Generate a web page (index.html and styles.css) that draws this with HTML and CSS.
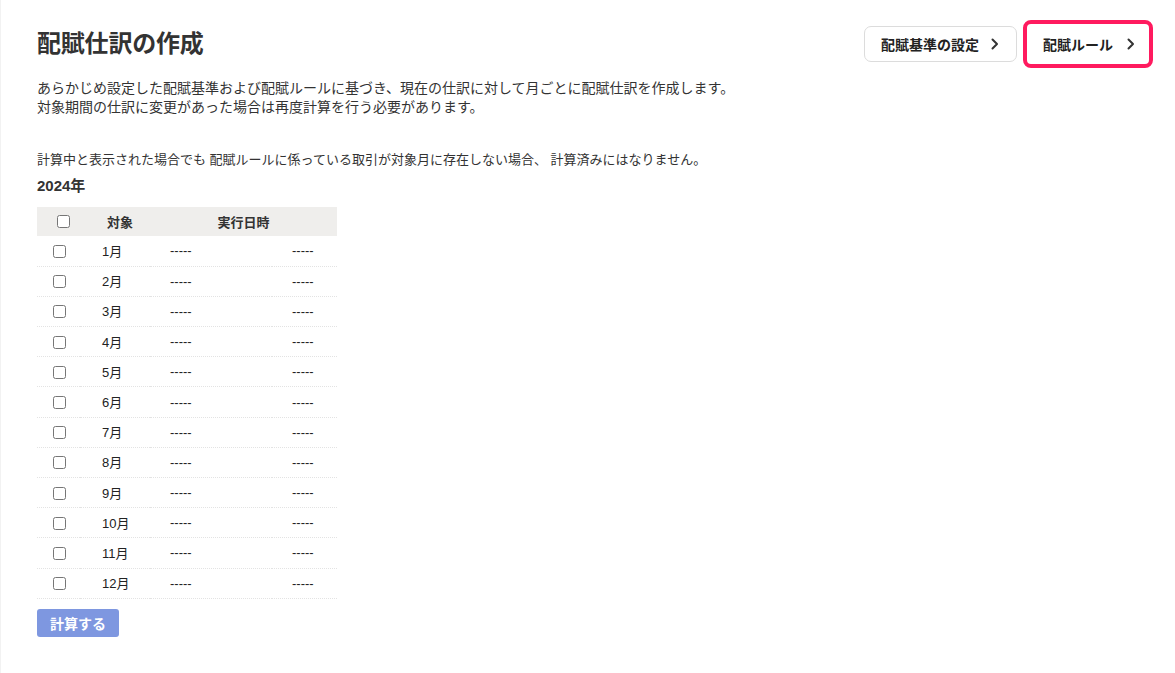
FILE: index.html
```html
<!DOCTYPE html>
<html lang="ja">
<head>
  <meta charset="UTF-8" />
  <meta name="viewport" content="width=device-width, initial-scale=1.0"/>
  <title>配賦仕訳の作成</title>
  <link rel="stylesheet" href="styles.css">
</head>
<body>
  <div class="page">
    <div class="page-header">
      <h1 class="page-title">配賦仕訳の作成</h1>
      <div class="header-actions">
        <a class="link-button link-button-base" href="#">配賦基準の設定
          <svg class="chevron" viewBox="0 0 8 12"><polyline points="1.5,1.5 6,6 1.5,10.5" /></svg>
        </a>
        <span class="highlight">
          <a class="link-button link-button-rule" href="#">配賦ルール
            <svg class="chevron" viewBox="0 0 8 12"><polyline points="1.5,1.5 6,6 1.5,10.5" /></svg>
          </a>
        </span>
      </div>
    </div>

    <p class="description">
      あらかじめ設定した配賦基準および配賦ルールに基づき、現在の仕訳に対して月ごとに配賦仕訳を作成します。<br>
      対象期間の仕訳に変更があった場合は再度計算を行う必要があります。
    </p>

    <p class="note">計算中と表示された場合でも 配賦ルールに係っている取引が対象月に存在しない場合、 計算済みにはなりません。</p>

    <h2 class="year">2024年</h2>

    <table class="month-table">
      <colgroup>
        <col class="col-check">
        <col class="col-month">
        <col class="col-date">
        <col class="col-status">
      </colgroup>
      <thead>
        <tr>
          <th class="cell-check-head"><input type="checkbox"></th>
          <th class="cell-target-head">対象</th>
          <th colspan="2">実行日時</th>
        </tr>
      </thead>
      <tbody>
        <tr><td class="cell-check"><input type="checkbox"></td><td class="cell-month">1月</td><td class="cell-dash">-----</td><td class="cell-dash">-----</td></tr>
        <tr><td class="cell-check"><input type="checkbox"></td><td class="cell-month">2月</td><td class="cell-dash">-----</td><td class="cell-dash">-----</td></tr>
        <tr><td class="cell-check"><input type="checkbox"></td><td class="cell-month">3月</td><td class="cell-dash">-----</td><td class="cell-dash">-----</td></tr>
        <tr><td class="cell-check"><input type="checkbox"></td><td class="cell-month">4月</td><td class="cell-dash">-----</td><td class="cell-dash">-----</td></tr>
        <tr><td class="cell-check"><input type="checkbox"></td><td class="cell-month">5月</td><td class="cell-dash">-----</td><td class="cell-dash">-----</td></tr>
        <tr><td class="cell-check"><input type="checkbox"></td><td class="cell-month">6月</td><td class="cell-dash">-----</td><td class="cell-dash">-----</td></tr>
        <tr><td class="cell-check"><input type="checkbox"></td><td class="cell-month">7月</td><td class="cell-dash">-----</td><td class="cell-dash">-----</td></tr>
        <tr><td class="cell-check"><input type="checkbox"></td><td class="cell-month">8月</td><td class="cell-dash">-----</td><td class="cell-dash">-----</td></tr>
        <tr><td class="cell-check"><input type="checkbox"></td><td class="cell-month">9月</td><td class="cell-dash">-----</td><td class="cell-dash">-----</td></tr>
        <tr><td class="cell-check"><input type="checkbox"></td><td class="cell-month">10月</td><td class="cell-dash">-----</td><td class="cell-dash">-----</td></tr>
        <tr><td class="cell-check"><input type="checkbox"></td><td class="cell-month">11月</td><td class="cell-dash">-----</td><td class="cell-dash">-----</td></tr>
        <tr><td class="cell-check"><input type="checkbox"></td><td class="cell-month">12月</td><td class="cell-dash">-----</td><td class="cell-dash">-----</td></tr>
      </tbody>
    </table>

    <button class="button-calc" disabled>計算する</button>
  </div>
</body>
</html>
```

FILE: styles.css
```css
:root {
  --text-color: #333;
  --border-color: #dcdcdc;
  --head-bg: #efeeec;
  --accent: #7e97e0;
  --highlight: #ff1a5f;
}

* {
  box-sizing: border-box;
  margin: 0;
  padding: 0;
}

body {
  font-family: "Liberation Sans", "Noto Sans CJK JP", sans-serif;
  color: var(--text-color);
  background: #fff;
}

.page {
  min-height: 673px;
  padding: 20px 22px 0 36px;
  border-left: 1px solid #f2f2f2;
}

.page-header {
  display: flex;
  align-items: center;
  justify-content: space-between;
  height: 48px;
}

.page-title {
  font-size: 24px;
  font-weight: 700;
  line-height: 32px;
  letter-spacing: -0.2px;
}

.header-actions {
  display: flex;
  align-items: center;
  gap: 6px;
}

.link-button {
  display: flex;
  align-items: center;
  justify-content: space-between;
  border-radius: 7px;
  background: #fff;
  color: #222;
  font-size: 14px;
  font-weight: 700;
  text-decoration: none;
}

.link-button-base {
  width: 153px;
  height: 36px;
  padding: 0 17px 0 16px;
  border: 1px solid var(--border-color);
}

.link-button-rule {
  width: 122px;
  height: 40px;
  padding: 0 14px 0 16px;
}

.chevron {
  width: 8px;
  height: 12px;
  fill: none;
  stroke: #333;
  stroke-width: 2;
  stroke-linecap: round;
  stroke-linejoin: round;
}

.highlight {
  display: block;
  border: 4px solid var(--highlight);
  border-radius: 8px;
}

.description {
  margin-top: 11px;
  font-size: 14px;
  line-height: 19px;
}

.note {
  margin-top: 33px;
  font-size: 13px;
  line-height: 19px;
}

.year {
  margin-top: 6px;
  font-size: 15px;
  font-weight: 700;
  line-height: 22px;
}

.month-table {
  margin-top: 10px;
  width: 300px;
  border-collapse: collapse;
  table-layout: fixed;
  font-size: 13px;
}

.col-check { width: 43px; }
.col-month { width: 70px; }
.col-date { width: 122px; }
.col-status { width: 65px; }

.month-table thead tr {
  background: var(--head-bg);
  height: 29px;
}

.month-table th {
  font-weight: 700;
  text-align: center;
  vertical-align: middle;
}

.cell-target-head {
  padding-left: 10px;
}

.month-table tbody tr {
  height: 30.2px;
  border-bottom: 1px dotted #e3e3e3;
}

.month-table td {
  vertical-align: middle;
  color: #222;
}

.month-table input[type="checkbox"] {
  display: block;
  width: 13px;
  height: 13px;
  margin: 0;
}

.cell-check-head input[type="checkbox"] {
  margin-left: 20px;
}

.cell-check input[type="checkbox"] {
  margin-left: 16px;
  margin-top: 1px;
}

.cell-month {
  padding-left: 22px;
  padding-bottom: 1px;
}

.cell-dash {
  padding-left: 20px;
}

.button-calc {
  display: block;
  margin-top: 10px;
  width: 82px;
  height: 28px;
  border: none;
  border-radius: 3px;
  background: var(--accent);
  color: #fff;
  font-family: inherit;
  font-size: 14px;
  font-weight: 700;
}
```
